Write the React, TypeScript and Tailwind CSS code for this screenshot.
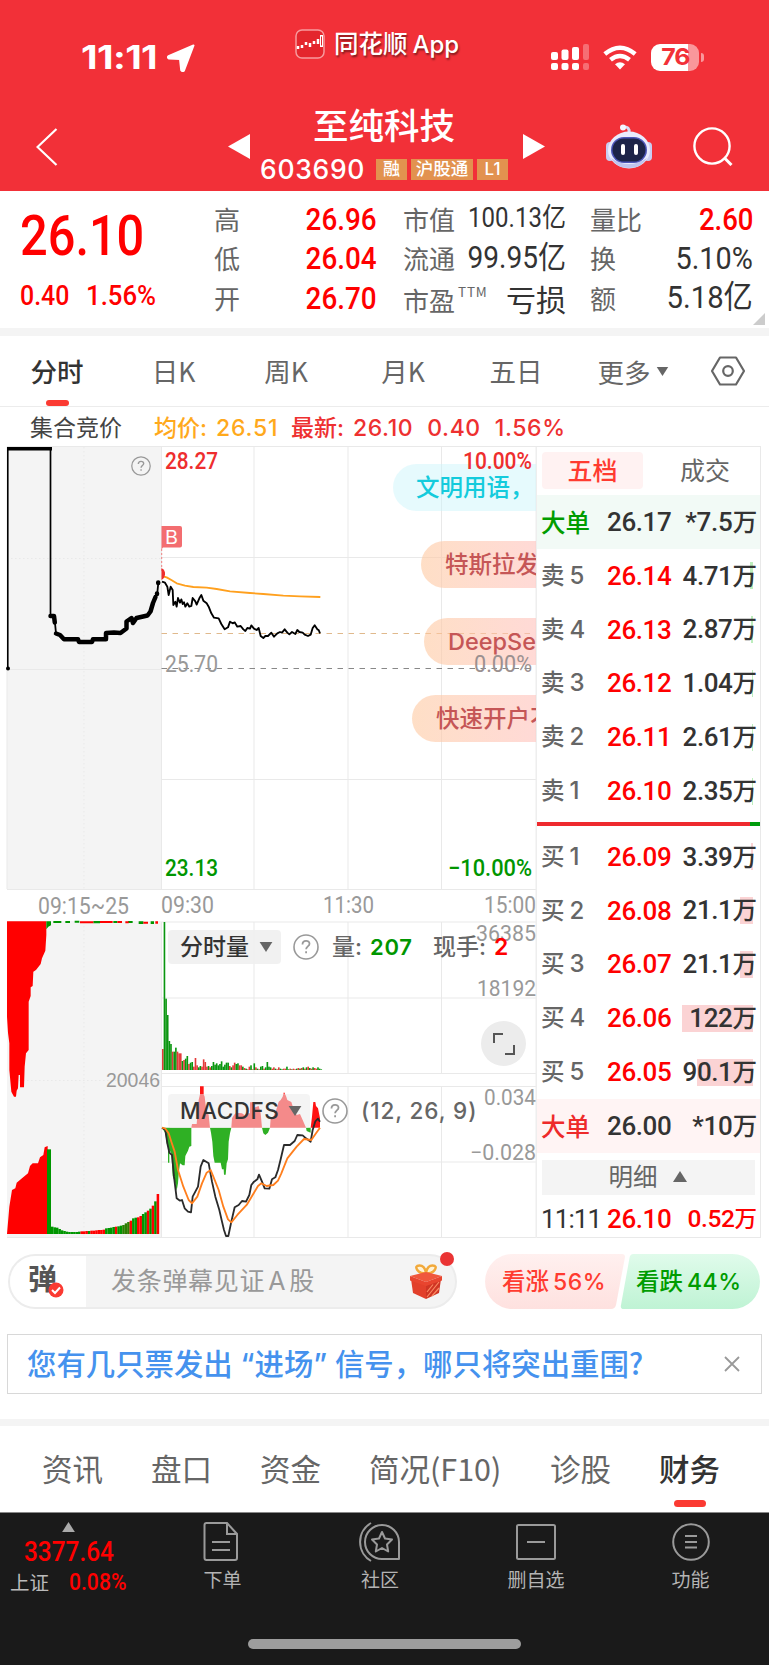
import type { ReactNode } from "react";
import clsx from "clsx";

const NUM = "font-[Roboto,'Noto_Sans_CJK_SC',sans-serif]";
const CJK = "font-['Noto_Sans_CJK_SC',sans-serif]";
const UI = "font-[Inter,'Noto_Sans_CJK_SC',sans-serif]";

type Level = { label: string; no: string; price: string; qty: string; bar: number };

const sells: Level[] = [
  { label: "卖", no: "5", price: "26.14", qty: "4.71", bar: 3 },
  { label: "卖", no: "4", price: "26.13", qty: "2.87", bar: 2 },
  { label: "卖", no: "3", price: "26.12", qty: "1.04", bar: 1 },
  { label: "卖", no: "2", price: "26.11", qty: "2.61", bar: 1 },
  { label: "卖", no: "1", price: "26.10", qty: "2.35", bar: 1 },
];

const buys: Level[] = [
  { label: "买", no: "1", price: "26.09", qty: "3.39", bar: 2 },
  { label: "买", no: "2", price: "26.08", qty: "21.1", bar: 13 },
  { label: "买", no: "3", price: "26.07", qty: "21.1", bar: 13 },
  { label: "买", no: "4", price: "26.06", qty: "122", bar: 71 },
  { label: "买", no: "5", price: "26.05", qty: "90.1", bar: 56 },
];

// height + direction of every minute bar, left to right
const volume =
  "63r 444g 214g 165g 87g 78g 55r 55g 67g 55r 50r 50r 27g 30r 34g 42g 18r 22g 24g 10r 36r 14r 8g 12g 10r 32r 24r 10r 12g 8r 12g 24g 16g 20g 14g 18g 26g 10g 16g 22g 22g 12r 8g 14r 22r 18g 20g 14r 14r 10g 6r 4g 2r 10r 14g 2r 20g 8r 4g 2r 10g 12g 4r 8g 24g 10g 8g 4r 8r 4g 2r 8r 4g 2g 4r 4r 10g 2g 4r 2g 4r 2r 4g 6r 4g 6r 8g 4r 8g 10r 6g 4r 8g 6r 4r 8g 4g 2g"
    .split(" ")
    .map((v) => ({ h: parseInt(v, 10), up: v.endsWith("r") }));

const auctionTail = [
  22, 20, 19, 15, 11, 9, 7, 6, 6, 6, 6, 7, 8, 8, 9, 9, 10, 10, 11, 12, 12, 13, 17, 18, 19, 21, 22, 23, 25, 27,
  32, 36, 40, 47, 49, 50, 54, 60, 65, 70, 76, 85, 98, 120,
];
const tailColors = "ggggggggggggrrrgrrrrrrggggrggooorggrrggrgrgr";

function Label({ x, y, w, size = 24, fill = "#999", weight = 400, font = "Roboto", children }: {
  x: number;
  y: number;
  w: number;
  size?: number;
  fill?: string;
  weight?: number;
  font?: string;
  children: string;
}) {
  return (
    <text x={x} y={y} textLength={w} lengthAdjust="spacingAndGlyphs" fontSize={size} fill={fill} fontWeight={weight} fontFamily={`${font}, sans-serif`}>
      {children}
    </text>
  );
}

function Fit({ children, scale = "scale-x-[.9]", origin = "origin-left", className }: {
  children: ReactNode;
  scale?: string;
  origin?: string;
  className?: string;
}) {
  return <span className={clsx("inline-block", NUM, scale, origin, className)}>{children}</span>;
}

function Caret({ className }: { className?: string }) {
  return (
    <svg viewBox="0 0 14 11" className={className} aria-hidden>
      <path d="M0 0h14L7 11z" fill="currentColor" />
    </svg>
  );
}

function Help({ className }: { className?: string }) {
  return (
    <svg viewBox="0 0 26 26" className={className} fill="none" stroke="#999" strokeWidth="1.600" aria-hidden>
      <circle cx="13" cy="13" r="12" />
      <path d="M9.500 10.500c0-4.600 7-4.600 7-.8 0 2.600-3.400 2.900-3.400 5.600M13.100 17.300v2" strokeWidth="1.800" />
    </svg>
  );
}

function Robot() {
  return (
    <svg viewBox="0 0 48 46" className="h-[46px] w-[48px]" aria-hidden>
      <path d="M18 3q7-1 6 6" stroke="#d9dcf5" strokeWidth="3" fill="none" />
      <circle cx="18" cy="3.500" r="3" fill="#f4f5ff" />
      <rect x="1" y="18" width="8" height="19" rx="4" fill="#c9cdf2" />
      <rect x="39" y="18" width="8" height="19" rx="4" fill="#c9cdf2" />
      <ellipse cx="24" cy="26" rx="21" ry="18.500" fill="#e9ebfd" />
      <path d="M6 34q18 12 36 0-5 10-18 10T6 34z" fill="#bfc4ee" />
      <rect x="6" y="13" width="36" height="26" rx="13" fill="#4c55b8" />
      <rect x="7.500" y="14.500" width="33" height="23" rx="11.500" fill="#1d2448" />
      <rect x="16" y="20" width="4" height="11" rx="2" fill="#fff" />
      <rect x="29" y="20" width="4" height="11" rx="2" fill="#fff" />
    </svg>
  );
}

function Header() {
  return (
    <header className="h-[191px] bg-[#f23038] text-white">
      <div className="flex h-[84px] items-start">
        <div className={clsx("ml-[81px] mt-[38px] flex h-10 w-[214px] items-center text-[32px] font-bold leading-none", UI)}>
          <span className="inline-block w-[77px] origin-left scale-x-[1.2] tracking-[-0.5px]">11:11</span>
          <svg viewBox="0 0 28 28" className="ml-[9px] h-7 w-7" aria-hidden>
            <path d="M26.500 1.500L17 26.500q-1.500 1.500-2.800-.4L13 15 2 14.500q-2-.8-.5-2.300z" fill="#fff" stroke="#fff" strokeWidth="2" strokeLinejoin="round" />
          </svg>
        </div>
        <svg viewBox="0 0 30 30" className="mt-[29px] h-[30px] w-[30px]" fill="none" stroke="#fff" aria-hidden>
          <rect x="1" y="1" width="28" height="28" rx="6" fill="#e4262d" stroke="#f79a9d" strokeWidth="1.500" />
          <path d="M3 17v3M7 16v3M11 13v3M15 14v4M19 12v3M23 10v5" strokeWidth="2.500" />
          <path d="M26.500 6v12" strokeWidth="3" />
          <path d="M26.500 7.500v9" stroke="#e4262d" />
        </svg>
        <div className={clsx("mt-[29px] ml-[9px] w-[216px] whitespace-nowrap text-[24.500px] font-medium leading-[30px] [text-shadow:1px_2px_2px_#0007]", UI)}>
          同花顺<span className="ml-[5px] text-[24px]">App</span>
        </div>
        <div className="mt-[43px] flex items-center pl-px">
          <svg viewBox="0 0 38 28" className="h-7 w-[38px]" fill="#fff" aria-hidden>
            <rect y="9" width="7" height="8" rx="2" />
            <rect x="10.500" y="6.500" width="7" height="10.500" rx="2" />
            <rect x="21" y="4" width="7" height="13" rx="2" />
            <rect x="32" y="1" width="6" height="16" rx="2" opacity=".3" />
            <rect y="20" width="7" height="7" rx="2" />
            <rect x="10.500" y="20" width="7" height="7" rx="2" />
            <rect x="21" y="20" width="7" height="7" rx="2" />
            <rect x="32" y="20" width="6" height="7" rx="2" opacity=".3" />
          </svg>
          <svg viewBox="0 0 34 25" className="ml-[14px] h-[25px] w-[34px]" fill="none" stroke="#fff" strokeWidth="4.500" aria-hidden>
            <path d="M1.800 9q15.200-12.500 30.400 0M7.500 14.800q9.500-7.600 19 0" />
            <path d="M17 24.500l-5-5.300q5-4 10 0z" fill="#fff" stroke="none" />
          </svg>
          <div className={clsx("ml-[14px] flex h-[27px] w-[48px] items-center justify-center rounded-[9px] bg-[linear-gradient(90deg,#fff_78%,#f9979b_78%)] text-[23.500px] font-bold leading-none text-[#f23038]", UI)}>
            <span className="scale-x-[1.06] tracking-[-1px]">76</span>
          </div>
          <span className="ml-[2px] h-[9px] w-[3px] rounded-r-full bg-[#f9979b]" />
        </div>
      </div>

      <div className="flex h-[107px] items-start">
        <svg viewBox="0 0 22 38" className="ml-[36px] mt-[44px] h-[38px] w-[22px]" fill="none" stroke="#fff" strokeWidth="2.200" aria-hidden>
          <path d="M20.500 1L1.500 19l19 18" />
        </svg>
        <svg viewBox="0 0 22 25" className="ml-[170px] mt-[50px] h-[25px] w-[22px]" aria-hidden>
          <path d="M22 0v25L0 12.500z" fill="#fff" />
        </svg>
        <div className="flex w-[273px] flex-col items-center pr-[5px]">
          <h1 className={clsx("mt-[20px] h-[40px] text-[35.500px] font-medium leading-[40px]", CJK)}>至纯科技</h1>
          <div className={clsx("mt-[13px] flex h-6 items-center gap-1 leading-none", UI)}>
            <span className="mr-[6px] w-[106px] text-[26.500px] font-medium leading-none tracking-[.7px]">603690</span>
            <span className="grid h-[21px] w-[31px] place-items-center bg-[#e2924f] text-[17px] font-medium">融</span>
            <span className="grid h-[21px] w-[62px] place-items-center bg-[#e2924f] text-[17.500px] font-medium">沪股通</span>
            <span className="grid h-[21px] w-[31px] place-items-center bg-[#e2924f] text-[17px] font-medium">L1</span>
          </div>
        </div>
        <svg viewBox="0 0 22 25" className="mt-[50px] h-[25px] w-[22px]" aria-hidden>
          <path d="M0 0v25l22-12.500z" fill="#fff" />
        </svg>
        <div className="ml-[60px] mt-[40px]">
          <Robot />
        </div>
        <svg viewBox="0 0 40 39" className="ml-[40px] mt-[43px] h-[39px] w-[40px]" fill="none" stroke="#fff" strokeWidth="2.400" aria-hidden>
          <circle cx="19" cy="19" r="17.600" />
          <path d="M31 30.500l7.500 7.500" strokeWidth="3" />
        </svg>
      </div>
    </header>
  );
}

const cell = "flex h-[39.500px] items-center justify-between whitespace-nowrap leading-none";

function Quote() {
  return (
    <section className={clsx("flex h-[137px] text-[26px] text-[#666]", CJK)}>
      <div className="ml-[20px] w-[194px] font-medium text-[#ff0000]">
        <div className="mt-[15px] h-[50px] text-[56px] leading-[50px]">
          <Fit scale="scale-x-[.87]">26.10</Fit>
        </div>
        <div className="mt-[23px] flex h-[34px] items-center text-[28px] leading-none">
          <Fit scale="scale-x-[.89]" className="w-[66px]">0.40</Fit>
          <Fit scale="scale-x-[.92]">1.56%</Fit>
        </div>
      </div>
      <div className="mt-[8px] w-[163px]">
        {[["高", "26.96"], ["低", "26.04"], ["开", "26.70"]].map(([k, v]) => (
          <div key={k} className={cell}>
            <span>{k}</span>
            <Fit origin="origin-right" className="text-[32px] font-medium text-[#ff0000]" scale="scale-x-[.87]">{v}</Fit>
          </div>
        ))}
      </div>
      <div className="ml-[26px] mt-[8px] w-[163px]">
        <div className={cell}>
          <span>市值</span>
          <Fit origin="origin-right" className="text-[27px] text-[#333]" scale="scale-x-[.89]">100.13亿</Fit>
        </div>
        <div className={cell}>
          <span>流通</span>
          <Fit origin="origin-right" className="text-[30.500px] text-[#333]" scale="scale-x-[.92]">99.95亿</Fit>
        </div>
        <div className={cell}>
          <span className="pt-[4px]">
            市盈<sup className="-top-[14px] ml-[3px] text-[13.500px] tracking-[.8px]">TTM</sup>
          </span>
          <span className="text-[30px] text-[#333]">亏损</span>
        </div>
      </div>
      <div className="ml-[24px] mt-[8px] w-[163px]">
        <div className={cell}>
          <span>量比</span>
          <Fit origin="origin-right" className="text-[32px] font-medium text-[#ff0000]" scale="scale-x-[.86]">2.60</Fit>
        </div>
        <div className={cell}>
          <span>换</span>
          <Fit origin="origin-right" className="text-[32px] text-[#333]" scale="scale-x-[.9]">5.10%</Fit>
        </div>
        <div className={cell}>
          <span>额</span>
          <Fit origin="origin-right" className="text-[31.500px] text-[#333]" scale="scale-x-[.93]">5.18亿</Fit>
        </div>
      </div>
      <svg viewBox="0 0 12 12" className="mt-auto mb-[3px] h-3 w-3" aria-hidden>
        <path d="M12 0v12H0z" fill="#ccc" />
      </svg>
    </section>
  );
}

const gridLine = "#e9e9e9";

function Chart() {
  return (
    <div className="relative h-[800px] w-[537px] shrink-0 overflow-hidden">
      <svg viewBox="0 440 537 800" className="block h-[800px] w-[537px]" fill="none">
        <rect x="7" y="447" width="154" height="442" fill="#f4f4f4" />
        <rect x="7" y="921" width="154" height="317" fill="#f4f4f4" />
        <g stroke={gridLine}>
          <path d="M7 446.500h530M161 557.500h375M7 669.500h154M161 779.500h375M7 889.500h529M161 922h375M161 998h375M161 1073.500h375M161 1086.500h375M161 1162h375M7 1237.500h530" />
          <path d="M161.500 447v442M254 447v442M348 447v442M441.500 447v442M254 922v151M348 922v151M441.500 922v151M254 1087v150M348 1087v150M441.500 1087v150M161.500 922v316M7 447v442" />
          <path d="M84 447v442M84 922v316M11 558.500h150M11 1080.500h150" strokeDasharray="1.500 2.500" />
        </g>
        <path d="M536.300 447v791" stroke="#eee" strokeWidth="1.600" />

        {/* call auction */}
        <path d="M7.800 669V449" stroke="#000" strokeWidth="1.600" />
        <path d="M7 448.800h45" stroke="#000" strokeWidth="3.400" />
        <path d="M50.500 449v167" stroke="#000" strokeWidth="1.700" />
        <path
          d="M50.500 616h3.500l.8 6.500M56 633.500l4 1.500 4 4.300h14l1 2.700h13l1-2.700h13v-6.300l8-.5 6.500.5 6-4.500v-7l5-3.500 1.500 5 3.500-5 11-2.500 3-4 2.500-8.500 2.500-6M157 593.500v.5M158.200 582.500v.5"
          stroke="#000"
          strokeWidth="4.500"
          strokeLinecap="round"
          strokeLinejoin="round"
        />
        <path d="M55 623l1 10.500M157 596l1.300-13" stroke="#000" strokeWidth="1.800" />
        <circle cx="8" cy="668.500" r="2" fill="#000" />

        <path d="M161.500 633.500h374" stroke="#e0b98c" strokeDasharray="5.500 5.500" />
        <path d="M161.500 668.500h374" stroke="#888" strokeDasharray="5.500 5.500" />

        <g transform="translate(150 440) scale(.33333)" strokeLinejoin="round">
          <path d="M36 408L50 412 64 420 80 430 105 437 130 441 170 443 200 447 240 454 300 459 340 462 400 467 450 469 511 471" stroke="#ffa01e" strokeWidth="5.500" />
          <path
            d="M36 425L45 428 52 440 56 465 62 440 68 450 70 495 76 485 80 500 84 474 90 488 94 478 98 492 102 487 106 500 112 490 118 500 124 498 128 474 136 484 140 494 148 475 154 465 160 482 170 490 176 500 184 520 192 533 206 535 214 552 224 568 234 562 240 545 248 550 254 547 262 560 272 558 280 568 286 573 292 564 300 566 304 556 312 566 320 570 326 564 332 588 340 594 346 588 354 588 364 578 372 590 382 580 390 576 396 578 404 568 412 578 418 583 426 576 436 582 442 570 448 576 458 578 464 584 474 588 482 584 488 564 494 556 502 568 506 570 510 580"
            stroke="#000"
            strokeWidth="5.500"
          />
        </g>
        <path d="M161.700 549v22" stroke="#f08080" strokeDasharray="2 2" />
        <path d="M161.500 568q4 2 3.500 6.500-.5 4-3.500 5.500z" fill="#ee2e2e" />
        <path d="M161.500 526h18.500q2 0 2 2v17.500q0 2-2 2h-17l-1.500 2z" fill="#f36d70" />
        <Label x={165} y={543.500} w={13} size={19} fill="#fff" font="Inter">B</Label>

        {/* auction volume */}
        <g transform="translate(0 880) scale(.33333)">
          <path
            d="M21 124H139V165L136 212 126 235 122 252 108 270 100 275 98 318 92 322 92 348 86 365 86 510 78 520 74 560 72 622 60 622 60 585 56 585 54 625 50 632 48 650 42 650 34 635 28 570 28 490 24 458 21 410z"
            fill="#f00"
          />
          <path d="M139 124h14v12l-8 4-6 8zM160 123h24v6h-24zM196 123h14v6h-14zM224 122h14v6h-14zM280 123h20v7h-20zM340 123h12v6h-12zM384 123h14v6h-14zM416 124h14v8h-14zM452 124h10v8h-10z" fill="#009600" />
          <path d="M240 124h40v6h-40zM300 123h38v6h-38zM352 123h14v6h-14zM376 124h10v6h-10zM430 125h14v6h-14zM466 124h8v7h-8z" fill="#f00" />
          <path d="M21 1062L28 980 36 930 46 925 50 908 66 895 84 880 90 858 98 850 114 850 120 832 130 825 134 802 143 798 143 1062z" fill="#f00" />
          <path d="M141 808h12v254h-12z" fill="#009600" />
          {auctionTail.map((h, i) => (
            <rect
              key={i}
              x={153 + i * 7.37}
              y={1062 - h}
              width={7.6}
              height={h}
              fill={tailColors[i] === "r" ? "#f00" : tailColors[i] === "o" ? "#2c7d00" : "#009600"}
            />
          ))}
        </g>

        {/* minute volume + MACD */}
        <g transform="translate(150 900) scale(.33333)">
          {volume.map((b, i) => (
            <rect key={i} x={36 + i * 4.9} y={510 - b.h} width={4.9} height={b.h} fill={b.up ? "#e33a3a" : "#0a960f"} />
          ))}
          <path
            d="M36 683H124V738L118 740 114 752 106 768 104 796 98 796 90 790 86 822 84 850 80 872 76 850 68 828 64 760 58 750V788H54V740L50 730 46 700zM180 683L183 698 187 725 190 768 194 788 212 788 216 808 221 808 222 824 227 824 230 790 234 778 236 725 240 700 244 683zM336 683L340 700 346 705 354 698 360 683zM468 683l2 10 12 5v-15z"
            fill="#2fb024"
          />
          <path
            d="M124 683L126 672 140 672 146 600 150 583V559H161V583L164 590 168 625 176 645 180 683zM244 683L246 655 252 645 258 638 276 640 284 646 290 640 300 640 300 607 309 607 309 625 316 622 326 618 332 640 336 683zM360 683L362 655 370 650 378 632 386 605 392 600 398 590 402 576 408 588 412 600 424 606 430 625 440 645 450 642 458 660 468 683zM482 683L486 650 490 606 496 606 498 618 504 625 510 655 510 683z"
            fill="#ff1414"
          />
          <g strokeLinejoin="round">
            <path
              d="M36 683L46 690 52 730 58 758 66 765 72 830 80 895 90 902 96 900 104 925 114 935 123 937 128 890 144 860 152 800 160 780 176 790 186 845 196 890 208 930 216 965 222 990 228 1008 235 1008 244 965 254 922 266 915 276 903 288 905 298 885 304 855 312 845 322 838 327 824 336 845 344 865 358 866 366 838 376 832 384 810 392 778 402 735 420 735 434 723 442 705 458 706 468 715 482 725 488 690 496 664 504 656 510 665"
              stroke="#2b2b2b"
              strokeWidth="5.500"
            />
            <path
              d="M36 683L46 686 56 700 64 725 74 755 84 810 100 860 116 900 126 910 142 890 156 850 170 818 182 810 190 830 206 870 220 920 234 958 244 967 262 945 290 915 308 885 324 858 334 850 350 858 370 855 384 842 394 820 412 775 440 740 462 717 484 720 498 700 510 683"
              stroke="#ff7f1e"
              strokeWidth="5.500"
            />
          </g>
        </g>

        <Label x={165} y={469} w={53} size={23} weight={500} fill="#ee2e2e">28.27</Label>
        <Label x={165} y={672} w={53} size={23}>25.70</Label>
        <Label x={165} y={876} w={53} size={23} weight={500} fill="#009600">23.13</Label>
        <Label x={38} y={914} w={91} size={23}>09:15~25</Label>
        <Label x={161} y={913} w={53} size={23}>09:30</Label>
        <Label x={323} y={913} w={51} size={23}>11:30</Label>
        <Label x={484} y={913} w={52} size={23}>15:00</Label>
        <Label x={106} y={1087} w={54} size={20} font="'Liberation Sans'">20046</Label>
        <Label x={476} y={941} w={60} size={22}>36385</Label>
        <Label x={477} y={996} w={59} size={22}>18192</Label>
        <Label x={484} y={1105} w={52} size={22}>0.034</Label>
        <Label x={470} y={1160} w={66} size={22}>−0.028</Label>
      </svg>

      {/* drifting comments */}
      <div className={clsx("absolute right-[1px] top-[24px] flex w-[143px] flex-col items-end gap-[30px] overflow-hidden whitespace-nowrap text-[23.500px] font-medium leading-[48px] text-[#c55656]", UI)}>
        <div className="h-[47px] w-[143px] rounded-l-full bg-[#c8f3fa]/45 pl-[23px] text-[#14cbdc]">文明用语，</div>
        <div className="h-[47px] w-[115px] rounded-l-full bg-linear-to-r from-[#fec9a0]/60 to-[#ffc1bb]/60 pl-[24px]">特斯拉发</div>
        <div className="h-[47px] w-[112px] rounded-l-full bg-linear-to-r from-[#fec9a0]/60 to-[#ffc1bb]/60 pl-[24px]">DeepSeek</div>
        <div className="h-[47px] w-[124px] overflow-hidden rounded-l-full bg-linear-to-r from-[#fec9a0]/60 to-[#ffc1bb]/60 pl-[24px]">快速开户不</div>
      </div>
      <svg viewBox="0 440 537 800" className="absolute inset-0 h-[800px] w-[537px]">
        <Label x={463} y={469} w={69} size={23} weight={500} fill="#ee2e2e">10.00%</Label>
        <Label x={474} y={672} w={58} size={23} fill="#9b9090">0.00%</Label>
        <Label x={448} y={876} w={84} size={23} weight={500} fill="#009600">−10.00%</Label>
      </svg>

      <Help className="absolute left-[131px] top-[16px] h-5 w-5" />

      <div className={clsx("absolute left-[168px] top-[490px] flex h-[34px] items-center whitespace-nowrap text-[23px] leading-none text-[#666]", UI)}>
        <div className="flex h-full w-[113px] items-center justify-between rounded bg-[#f0f0f0]/90 pl-[12px] pr-[8px] font-medium text-[#333]">
          分时量
          <Caret className="h-[10px] w-[14px] text-[#666]" />
        </div>
        <Help className="ml-[12px] h-[26px] w-[26px]" />
        <span className="ml-[13px] font-medium">量:</span>
        <b className="ml-[8px] w-[63px] text-[22px] font-semibold tracking-[.7px] text-[#009600]">207</b>
        <span className="font-medium">现手:</span>
        <b className="ml-[8px] text-[23px] font-semibold text-[#f00]">2</b>
      </div>

      <div className="absolute left-[481px] top-[581px] grid h-[45px] w-[45px] place-items-center rounded-full bg-[#ececec]">
        <svg viewBox="0 0 24 24" className="h-6 w-6" fill="none" stroke="#555" strokeWidth="2" aria-hidden>
          <path d="M2 11V2h9M22 13v9h-9" />
        </svg>
      </div>

      <div className={clsx("absolute left-[168px] top-[654px] flex h-[34px] items-center whitespace-nowrap leading-none", UI)}>
        <div className="flex h-full w-[142px] items-center justify-between rounded bg-[#ebebeb]/55 pl-[12px] pr-[8px] text-[22.500px] font-medium text-[#333]">
          <span className="tracking-[.5px]">MACDFS</span>
          <Caret className="h-[10px] w-[14px] text-[#666]" />
        </div>
        <Help className="ml-[12px] h-[26px] w-[26px]" />
        <span className="ml-[13px] text-[22.500px] font-medium tracking-[.9px] text-[#666]">(12, 26, 9)</span>
      </div>
    </div>
  );
}

function LevelRow({ level, sell }: { level: Level; sell?: boolean }) {
  return (
    <div className="flex h-[53.800px] items-center pl-[4px] leading-none">
      <span className={clsx("flex w-[66px] items-baseline text-[23.500px] font-medium text-[#666]", UI)}>
        {level.label}
        <span className="ml-[5px] text-[24px]">{level.no}</span>
      </span>
      <span className="w-[63px] text-[26px] font-medium tracking-[-.4px] text-[#ff0000]">{level.price}</span>
      <span className="relative ml-auto mr-[3px] flex h-[27px] items-center">
        <i className={clsx("absolute right-[4px] top-0 h-[27px]", sell ? "bg-[#bdeebd]" : "bg-[#fbd3d4]")} style={{ width: level.bar }} />
        <span className="relative whitespace-nowrap text-[26px] font-medium tracking-[-.4px] text-[#333]">
          {level.qty}<span className="text-[24.500px] tracking-normal">万</span>
        </span>
      </span>
    </div>
  );
}

function BigOrder({ price, qty, className, labelClass }: { price: string; qty: string; className: string; labelClass: string }) {
  return (
    <div className={clsx("flex h-[54px] items-center pl-[4px] text-[26px] font-medium leading-none text-[#333]", className)}>
      <span className={clsx("w-[66px] text-[24.500px]", CJK, labelClass)}>大单</span>
      <span className="tracking-[-.4px]">{price}</span>
      <span className="ml-auto mr-[3px] tracking-[-.2px]">
        *{qty}<span className="text-[24.500px]">万</span>
      </span>
    </div>
  );
}

function OrderBook() {
  return (
    <div className={clsx("mt-[6px] h-[792px] w-[224px] border-y border-r border-[#e9e9e9]", NUM)}>
      <div className={clsx("flex h-[48px] items-center text-[25px] leading-none", CJK)}>
        <span className="ml-[5px] mt-[-1px] grid h-[37px] w-[101px] place-items-center rounded bg-[#fff2f2] pb-[2px] font-medium text-[#ff3b30]">五档</span>
        <span className="ml-[37px] pb-[3px] text-[#666]">成交</span>
      </div>
      <BigOrder price="26.17" qty="7.5" className="bg-[#f2faf6]" labelClass="text-[#009c00]" />
      {sells.map((l) => (
        <LevelRow key={l.no} level={l} sell />
      ))}
      <div className="mt-[4px] flex h-[4px]">
        <i className="w-[213px] bg-[#ee2a2e]" />
        <i className="flex-1 bg-[#009c0c]" />
      </div>
      <div className="mt-[4px]">
        {buys.map((l) => (
          <LevelRow key={l.no} level={l} />
        ))}
      </div>
      <BigOrder price="26.00" qty="10" className="bg-[#fff4f4]" labelClass="text-[#ee2a2a]" />
      <div className={clsx("mx-[5px] mt-[7px] flex h-[35px] items-center justify-center bg-[#f4f4f4] pb-[2px] pr-[2px] text-[24.500px] leading-none text-[#666]", CJK)}>
        明细
        <Caret className="ml-[15px] h-[11px] w-[14px] rotate-180" />
      </div>
      <div className="flex h-[42px] items-center pl-[4px] pt-[7px] text-[26px] font-medium leading-none text-[#f00]">
        <span className="w-[66px] font-normal tracking-[-.9px] text-[#333]">11:11</span>
        <span className="tracking-[-.4px]">26.10</span>
        <span className="ml-auto mr-[3px] text-[24.500px] tracking-[-.4px]">
          0.52<span className="text-[22.500px] tracking-normal">万</span>
        </span>
      </div>
    </div>
  );
}

function Gift() {
  return (
    <svg viewBox="0 0 34 36" className="h-[36px] w-[34px] -translate-x-[2px]" aria-hidden>
      <path d="M17 9.500C9 10 3.500 1.500 10.500 1.500q5.500 0 6.500 8 1-8 6.500-8c7 0 1.500 8.500-6.500 8z" fill="#fff3d6" stroke="#f2a93a" strokeWidth="2.400" />
      <path d="M2 15l15 5v15L4 29z" fill="#e2402b" />
      <path d="M32 15l-15 5v15l13-6z" fill="#cf3524" />
      <path d="M1 12L17 8l16 4-16 6z" fill="#f0573c" />
      <path d="M1 12l16 6 16-6v4.500L17 22 1 16.500z" fill="#e8452f" />
      <path d="M30 18L18 33M24 20.500L18 28M30 24l-7 8" stroke="#fb8a62" strokeWidth="1.200" />
    </svg>
  );
}

function Barrage() {
  return (
    <section className="mt-[12px] flex h-[60px] items-start">
      <div className="relative ml-[8px] mt-[2px] flex h-[55px] w-[449px] items-center rounded-full border-2 border-[#ececec] bg-[#f4f4f4]">
        <div className={clsx("relative flex h-full w-[76px] items-center rounded-l-full bg-white pb-[9px] pl-[18px] text-[29px] font-bold leading-none text-[#555]", CJK)}>
          弹
          <svg viewBox="0 0 16 16" className="absolute left-[38px] top-[26px] h-4 w-4" fill="none" aria-hidden>
            <circle cx="8" cy="8" r="7.500" fill="#fb3a32" />
            <path d="M4 8l3 3 5-5.500" stroke="#fff" strokeWidth="2" />
          </svg>
        </div>
        <span className={clsx("ml-[25px] w-[300px] whitespace-nowrap text-[25px] leading-none tracking-[.7px] text-[#999]", UI)}>
          发条弹幕见证<span className="mx-[3px]">A</span>股
        </span>
        <Gift />
        <i className="absolute -top-[4px] right-[1px] h-[14px] w-[14px] rounded-full bg-[#ea3434]" />
      </div>
      <div className={clsx("relative ml-[28px] mt-[2px] h-[55px] w-[276px] font-medium", UI)}>
        <svg viewBox="0 0 276 55" className="absolute inset-0 h-[55px] w-[276px]" aria-hidden>
          <defs>
            <linearGradient id="up" x2="0" y2="1">
              <stop stopColor="#fff0ef" />
              <stop offset="1" stopColor="#fee1df" />
            </linearGradient>
            <linearGradient id="down" x1="1" y1="0" x2="1" y2="1">
              <stop stopColor="#e0fbeb" />
              <stop offset="1" stopColor="#bff3d4" />
            </linearGradient>
          </defs>
          <path d="M27.500 0H137q3 0 3 3l-9 48q-1 4-5 4H27.500a27.500 27.500 0 010-55z" fill="url(#up)" />
          <path d="M148.500 0H247.500a27.500 27.500 0 010 55H139q-4 0-3-4l8.500-47q.5-4 4-4z" fill="url(#down)" />
        </svg>
        <div className="relative flex h-full items-center whitespace-nowrap leading-none">
          <span className="ml-[17px] w-[134px] text-[#ff3b30]">
            <span className="text-[23.500px]">看涨</span><span className="ml-[4px] text-[23px] tracking-[.5px]">56%</span>
          </span>
          <span className="text-[#009c00]">
            <span className="text-[23.500px]">看跌</span><span className="ml-[4px] text-[23px] tracking-[.5px]">44%</span>
          </span>
        </div>
      </div>
    </section>
  );
}

const navItem = "flex flex-col items-center text-[19px] leading-none text-[#b4b4b4]";

function BottomBar() {
  return (
    <footer className={clsx("flex h-[152px] flex-col bg-[#1a1a1a]", CJK)}>
      <div className="flex h-[126px] items-start">
        <div className="flex w-[144px] flex-col">
          <Caret className="ml-[60px] mt-[9px] h-[10px] w-[17px] rotate-180 text-[#aaa]" />
          <Fit scale="scale-x-[.87]" className="ml-[24px] mt-[6px] w-[110px] text-[28px] font-medium leading-[28px] text-[#f00]">3377.64</Fit>
          <div className="mt-[2px] flex h-[28px] items-center whitespace-nowrap pl-[10px] text-[19.500px] leading-none text-[#bbb]">
            上证
            <Fit scale="scale-x-[.88]" className="ml-[20px] text-[24px] font-medium text-[#f00]">0.08%</Fit>
          </div>
        </div>
        <div className={clsx(navItem, "w-[157px]")}>
          <svg viewBox="0 0 36 40" className="mt-[9px] h-[40px] w-[36px] -translate-x-[2px]" fill="none" stroke="#9a9a9a" strokeWidth="2" aria-hidden>
            <path d="M1.500 3q0-2 2-2H24l10 11v24q0 2-2 2H3.500q-2 0-2-2zM24 1v11h10M9 20h18M9 28h18" />
          </svg>
          <span className="mt-[7px]">下单</span>
        </div>
        <div className={clsx(navItem, "w-[158px]")}>
          <svg viewBox="0 0 42 40" className="mt-[9px] h-[40px] w-[42px] -translate-x-px" fill="none" stroke="#9a9a9a" strokeWidth="2" strokeLinejoin="round" aria-hidden>
            <path d="M41 37H24A17 17 0 1141 20zM13 1a22 22 0 000 38" />
            <path d="M24 10l3 6.500 7 1-5 5 1.200 7L24 26l-6.200 3.500L19 22.500l-5-5 7-1z" />
          </svg>
          <span className="mt-[7px]">社区</span>
        </div>
        <div className={clsx(navItem, "w-[154px]")}>
          <svg viewBox="0 0 40 40" className="mt-[9px] h-[40px] w-[40px]" fill="none" stroke="#9a9a9a" strokeWidth="2" aria-hidden>
            <rect x="1" y="3" width="38" height="34" rx="1.500" />
            <path d="M11 20h18" />
          </svg>
          <span className="mt-[7px]">删自选</span>
        </div>
        <div className={clsx(navItem, "w-[155px]")}>
          <svg viewBox="0 0 40 40" className="mt-[9px] h-[40px] w-[40px]" fill="none" stroke="#9a9a9a" strokeWidth="2" aria-hidden>
            <circle cx="20" cy="20" r="17.800" />
            <path d="M14 14h12M14 20h12M14 25.500h12" />
          </svg>
          <span className="mt-[7px]">功能</span>
        </div>
      </div>
      <div className="mx-auto h-[10px] w-[273px] rounded-full bg-[#9d9d9d]" />
    </footer>
  );
}

export default function App() {
  return (
    <main className={clsx("h-[1665px] w-[769px] overflow-hidden bg-white", CJK)}>
      <Header />
      <Quote />
      <div className="h-[8px] bg-[#f4f4f4]" />

      <nav className="flex h-[71px] border-b border-[#ececec] text-[26.500px] leading-[69px] text-[#666]">
        <div className="relative w-[114px] text-center font-medium text-[#333]">
          分时
          <i className="absolute bottom-0 left-[46px] h-[6px] w-[23px] rounded-full bg-[#fb3a32]" />
        </div>
        <div className="w-[119px] text-center">日K</div>
        <div className="w-[106px] text-center">周K</div>
        <div className="w-[128px] text-center">月K</div>
        <div className="w-[98px] text-center">五日</div>
        <div className="flex w-[136px] items-center justify-center">
          更多
          <Caret className="ml-[5px] h-[9px] w-[13px]" />
        </div>
        <svg viewBox="0 0 34 30" className="ml-[10px] mt-[20px] h-[30px] w-[34px]" fill="none" stroke="#666" strokeWidth="2.200" aria-hidden>
          <path d="M9 1.500h16L33 15l-8 13.500H9L1 15z" strokeLinejoin="round" />
          <circle cx="17" cy="15" r="4.800" />
        </svg>
      </nav>

      <div className={clsx("flex h-[33px] items-center whitespace-nowrap pt-[9px] text-[23px] font-medium leading-none", UI)}>
        <span className="ml-[30px] w-[124px] font-normal text-[#444]">集合竞价</span>
        <span className="w-[137px] text-[#ffa91c]">均价:<span className="ml-[9px] tracking-[.8px]">26.51</span></span>
        <span className="text-[#ee3030]">
          最新:<span className="ml-[9px] tracking-[.6px]">26.10</span>
          <span className="ml-[14px] tracking-[.6px]">0.40</span>
          <span className="ml-[14px] tracking-[.6px]">1.56%</span>
        </span>
      </div>

      <section className="flex h-[800px]">
        <Chart />
        <OrderBook />
      </section>

      <Barrage />

      <div className="mx-[7px] mt-[22px] flex h-[60px] w-[755px] items-center border border-[#d8d8d8] pl-[19px] pr-[21px]">
        <span className="grow whitespace-nowrap text-[29.400px] font-medium leading-none text-[#4592ee]">
          您有几只票发出<span className={UI}> “</span>进场<span className={UI}>” </span>信号，哪只将突出重围?
        </span>
        <svg viewBox="0 0 16 16" className="h-4 w-4" stroke="#999" strokeWidth="1.800" aria-hidden>
          <path d="M1 1l14 14M15 1L1 15" />
        </svg>
      </div>

      <div className="mt-[25px] h-[7px] bg-[#f4f4f4]" />
      <nav className="flex h-[87px] whitespace-nowrap border-b border-[#888] pl-[42px] text-[30.500px] leading-[84px] text-[#666]">
        <span className="w-[109px]">资讯</span>
        <span className="w-[109px]">盘口</span>
        <span className="w-[109px]">资金</span>
        <span className="w-[181px]">简况(F10)</span>
        <span className="w-[109px]">诊股</span>
        <span className="relative font-medium text-[#333]">
          财务
          <i className="absolute bottom-[5px] left-[15px] h-[7px] w-[32px] rounded-full bg-[#fb3a32]" />
        </span>
      </nav>
      <BottomBar />
    </main>
  );
}
